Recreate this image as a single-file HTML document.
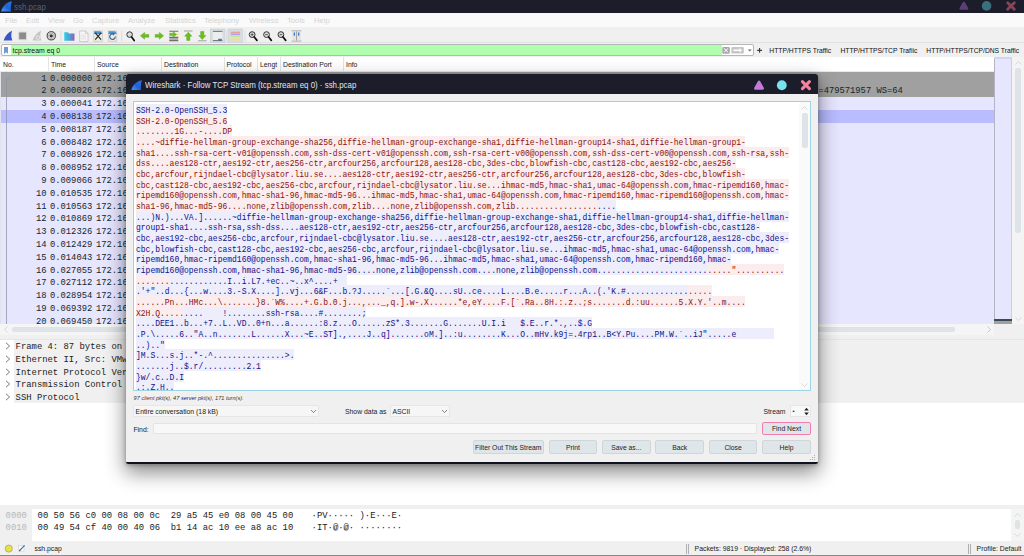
<!DOCTYPE html><html><head><meta charset="utf-8"><title>ssh.pcap</title><style>
#title .t,#menu span,#filter .txt,#hdr span,.row span,.drow span{margin-top:1.1px}

*{box-sizing:border-box;margin:0;padding:0}
html,body{width:1024px;height:556px;overflow:hidden;background:#fff}
body{position:relative;font-family:"Liberation Sans",sans-serif;font-size:8.5px;color:#222}
.abs{position:absolute}
.mono{font-family:"Liberation Mono",monospace}
#title{left:0;top:0;width:1024px;height:12.8px;background:#1b1d2b}
#title .t{left:14.4px;top:0;line-height:12.8px;font-size:8.8px;transform:scaleX(.905);transform-origin:0 0;white-space:nowrap;color:#5d606e}
#menu{left:0;top:12.8px;width:1024px;height:14.6px;background:#fafafa}
#menu span{position:absolute;top:0;line-height:14.6px;font-size:8.1px;transform:scaleX(.95);transform-origin:0 0;white-space:nowrap;color:#d4d4d4}
#tool{left:0;top:27.4px;width:1024px;height:15.4px;background:#f0f0f0;border-bottom:1px solid #e2e2e2}
#filter{left:0;top:42.8px;width:1024px;height:14.2px;background:#f0f0f0}
#fin{left:2px;top:1.5px;width:721px;height:11.4px;background:#afffaf;border:1px solid #b9c1b9;border-radius:1.5px}
#fbk{left:2px;top:1.5px;width:9px;height:11.4px;background:#fff;border:1px solid #b0b0b0;border-radius:1.5px}
#filter .txt{top:.4px;line-height:14px;font-size:6.9px;color:#111}
#hdr{left:0;top:57px;width:1024px;height:14.2px;background:#fff}
#hdr span{position:absolute;top:0;line-height:14.2px;font-size:6.85px;color:#222}
#hdr i{position:absolute;top:0;width:1px;height:14.2px;background:#e4e4e4}
.row{position:absolute;left:0;width:994.3px;height:12.8px;line-height:12.8px;font-size:8.81px;color:#12272e;white-space:pre}
.row span{position:absolute;top:0}
.drow{position:absolute;left:0;width:1024px;height:12.8px;line-height:12.8px;font-size:8.9px;color:#222;white-space:pre;background:linear-gradient(90deg,#fff 13.6px,#f0f0f0 13.6px)}
.stream{position:absolute;left:135.9px;top:104.1px;width:770px;font-size:9.2px;line-height:10.667px;white-space:pre;transform:scaleX(.8709);transform-origin:0 0}
.stream div{height:10.667px}
.stream span{display:inline-block;height:10.667px;line-height:14.4px;vertical-align:top}
.c{color:#8a1010;}
.s{color:#10108a;}
.btn{position:absolute;white-space:nowrap;height:11.2px;border:1px solid #cfd6da;background:#dfe6e9;border-radius:2px;font-size:6.8px;line-height:9.6px;text-align:center;color:#222}
</style></head><body>
<div id="title" class="abs">
<svg class="abs" style="left:1.2px;top:1px" width="11.4" height="10.8" viewBox="0 0 11.4 10.8"><defs><linearGradient id="fg0" x1="0" y1="1" x2="1" y2="0"><stop offset="0" stop-color="#4a9af5"/><stop offset=".5" stop-color="#1f62d8"/><stop offset="1" stop-color="#2a78e6"/></linearGradient></defs><path d="M0.2 10.5 C1.2 6 4.4 1.4 10.9 0.2 C9.8 3.4 9.5 7 10.1 10.5 Z" fill="url(#fg0)"/></svg>
<span class="abs t">ssh.pcap</span>
<svg class="abs" style="left:955px;top:0" width="66" height="13" viewBox="0 0 66 13"><path d="M5.6 8.5 L8.85 2.9 L12.1 8.5 Z" fill="#5d3f78" stroke="#5d3f78" stroke-width="2.4" stroke-linejoin="round"/><circle cx="31.6" cy="5.9" r="4.8" fill="#39707c"/><path d="M52.7 2.7 L59.3 9.3 M59.3 2.7 L52.7 9.3" stroke="#874359" stroke-width="2.9" stroke-linecap="round"/></svg>
</div>
<div id="menu" class="abs">
<span style="left:4.8px">File</span>
<span style="left:25.9px">Edit</span>
<span style="left:47.9px">View</span>
<span style="left:73.4px">Go</span>
<span style="left:92.1px">Capture</span>
<span style="left:128.2px">Analyze</span>
<span style="left:164.5px">Statistics</span>
<span style="left:204.2px">Telephony</span>
<span style="left:248.5px">Wireless</span>
<span style="left:287.1px">Tools</span>
<span style="left:313.8px">Help</span>
</div>
<div id="tool" class="abs">
<svg class="abs" style="left:0;top:.5px" width="320" height="15.4" viewBox="0 0 320 15.4">
<rect x="210.5" y="1" width="14.5" height="14" fill="#d5dde2" stroke="#c0c9ce" stroke-width=".5"/>
<rect x="228" y="1" width="14.5" height="14" fill="#d5dde2" stroke="#c0c9ce" stroke-width=".5"/>
<rect x="60.6" y="2.5" width=".6" height="11" fill="#d0d0d0"/>
<rect x="121.5" y="2.5" width=".6" height="11" fill="#d0d0d0"/>
<rect x="226.3" y="2.5" width=".6" height="11" fill="#d0d0d0"/>
<rect x="244.7" y="2.5" width=".6" height="11" fill="#d0d0d0"/>
<path d="M3.5 12.5 C5 8 8 4.5 12 2.8 C10.8 6 11 9.5 12.3 12.5 Z" fill="#3a55c8"/>
<rect x="18.6" y="4" width="7.8" height="7.8" fill="#8c8c8c" stroke="#dcdcdc" stroke-width="1"/>
<path d="M32.5 12.5 C34 8 37 4.5 41 2.8 C39.8 6 40 9.5 41.3 12.5 Z" fill="#c4c4c4"/><circle cx="37.8" cy="9.6" r="1.8" fill="none" stroke="#f4f4f4" stroke-width=".8"/>
<circle cx="51.2" cy="7.8" r="5.2" fill="#e2e2e2"/><circle cx="51.2" cy="7.8" r="4.1" fill="#ededed" stroke="#3a3a3a" stroke-width="1"/><circle cx="51.2" cy="7.8" r="2.7" fill="none" stroke="#8a8a8a" stroke-width=".7"/><circle cx="51.2" cy="7.8" r="1.6" fill="#333"/>
<defs><linearGradient id="gf" x1="0" x2="1"><stop offset="0" stop-color="#2fd0e6"/><stop offset=".55" stop-color="#4e9fd6"/><stop offset="1" stop-color="#9a55b8"/></linearGradient></defs>
<path d="M64.2 4.2 h3.6 l1 1.2 h5.6 v7.4 h-10.2 Z" fill="url(#gf)"/>
<path d="M79.6 3h6l2.4 2.4v8.2h-8.4z" fill="#f6f6f6" stroke="#bcbcbc" stroke-width=".7"/><path d="M85.6 3v2.4h2.4" fill="#dedede" stroke="#bcbcbc" stroke-width=".5"/><path d="M81.2 7h5.2M81.2 8.9h5.2M81.2 10.8h5.2" stroke="#c6c6c6" stroke-width=".6" stroke-dasharray="1.2 .5"/>
<rect x="93.8" y="3" width="8.6" height="10.2" fill="#efeede" stroke="#b8bcb8" stroke-width=".6"/><path d="M94.1 3.3h6.2l1.8 1.8v1h-8z" fill="#3f92dc"/><path d="M95.2 4.8 L101 11.6 M101 4.8 L95.2 11.6" stroke="#2a2a2a" stroke-width="1.2"/>
<rect x="108.2" y="3" width="8.6" height="10.2" fill="#efeede" stroke="#b8bcb8" stroke-width=".6"/><path d="M108.5 3.3h6.2l1.8 1.8v1h-8z" fill="#3f92dc"/><path d="M115.3 8.6 A2.8 2.8 0 1 1 113.6 6" fill="none" stroke="#4a6a9e" stroke-width="1.3"/><path d="M112.4 4.4 l2.8 1.4 l-2.2 1.9 z" fill="#4a6a9e"/>
<circle cx="129.6" cy="6.6" r="2.8" fill="#dcdcdc" stroke="#333" stroke-width="1"/><path d="M131.6 8.9 L134.2 12.6" stroke="#111" stroke-width="1.7" stroke-linecap="round"/>
<path d="M140.4 7.8 l4.2 -3.4 v2 h4.2 v2.8 h-4.2 v2 z" fill="#6cc01c" stroke="#4f9a10" stroke-width=".4"/>
<path d="M163.6 7.8 l-4.2 -3.4 v2 h-4.2 v2.8 h4.2 v2 z" fill="#6cc01c" stroke="#4f9a10" stroke-width=".4"/>
<path d="M169.3 3.2h9M169.3 9.4h9M169.3 11h9M169.3 12.6h9" stroke="#6e6e6e" stroke-width="1.1"/><rect x="175" y="5.6" width="3.6" height="1.4" fill="#ffe94a"/><path d="M176.6 6.4 l-3.4 -2.8 v1.6 h-3.6 v2.4 h3.6 v1.6 z" fill="#6cc01c" stroke="#4f9a10" stroke-width=".3"/>
<path d="M184 3h8.6" stroke="#9a9a9a" stroke-width=".9"/><path d="M188.3 4.2 l3.6 4 h-2 v4.2 h-3.2 v-4.2 h-2 z" fill="#6cc01c" stroke="#4f9a10" stroke-width=".4"/>
<path d="M198 12.8h8.6" stroke="#9a9a9a" stroke-width=".9"/><path d="M202.3 11.6 l3.6 -4 h-2 v-4.2 h-3.2 v4.2 h-2 z" fill="#6cc01c" stroke="#4f9a10" stroke-width=".4"/>
<rect x="213" y="3.2" width="9.4" height="9" fill="#ededed"/><path d="M213 3.4h9.4M213 12.6h9.4" stroke="#555" stroke-width=".8"/><path d="M218.2 11.2 h3.6 l-1.8 1.6 z" fill="#2b5fc2" stroke="#2b5fc2" stroke-width=".6"/>
<rect x="230.6" y="3" width="9.6" height="10" fill="#eee"/><path d="M230.6 4.3h9.6" stroke="#f29a9a" stroke-width="1.7"/><path d="M230.6 6.2h9.6" stroke="#a6a6ee" stroke-width="1.7"/><path d="M230.6 8.1h9.6" stroke="#b4e89a" stroke-width="1.7"/><path d="M230.6 10h9.6" stroke="#ecdc9a" stroke-width="1.7"/><path d="M230.6 11.9h9.6" stroke="#e8d8a8" stroke-width="1.7"/>
<circle cx="252.2" cy="6.6" r="2.9" fill="#d6d6d6" stroke="#333" stroke-width="1"/><path d="M254.29999999999998 8.9 L257.0 12.4" stroke="#111" stroke-width="1.7" stroke-linecap="round"/>
<path d="M250.89999999999998 6.6h2.6" stroke="#444" stroke-width=".8"/>
<path d="M252.2 5.3v2.6" stroke="#444" stroke-width=".8"/>
<circle cx="266.6" cy="6.6" r="2.9" fill="#d6d6d6" stroke="#333" stroke-width="1"/><path d="M268.70000000000005 8.9 L271.40000000000003 12.4" stroke="#111" stroke-width="1.7" stroke-linecap="round"/>
<path d="M265.3 6.6h2.6" stroke="#444" stroke-width=".8"/>
<circle cx="281" cy="6.6" r="2.9" fill="#d6d6d6" stroke="#333" stroke-width="1"/><path d="M283.1 8.9 L285.8 12.4" stroke="#111" stroke-width="1.7" stroke-linecap="round"/>
<path d="M279.7 6.6h2.6" stroke="#444" stroke-width=".8"/>
<path d="M291.8 3h9.6M291.8 13h9.6" stroke="#777" stroke-width=".7"/><rect x="292.4" y="3.4" width="8.4" height="9.2" fill="#e4e4e4"/><path d="M296.6 3.4v9.2" stroke="#888" stroke-width=".7"/><path d="M294.4 4.6v3.2M298.8 4.6v3.2" stroke="#2b6fd0" stroke-width="1.2"/>
</svg></div>
<div id="filter" class="abs">
<div class="abs" style="left:1.2px;top:1.5px;width:752.6px;height:11.5px;background:#fff;border:1px solid #b6b6b6;border-radius:2px;overflow:hidden"><div class="abs" style="left:8.8px;top:0;width:710.9px;height:10px;background:#afffaf"></div></div>
<svg class="abs" style="left:3.8px;top:4px" width="4.4" height="7" viewBox="0 0 4.4 7"><path d="M0 0h4.4v7l-2.2-1.7L0 7z" fill="#6e9bd6"/></svg>
<span class="abs txt" style="left:12.6px">tcp.stream eq 0</span>
<svg class="abs" style="left:720px;top:0" width="48" height="14.2" viewBox="0 0 48 14.2"><rect x="2.3" y="3.9" width="7.5" height="6.8" rx="1.2" fill="#a6a6a6"/><path d="M3.9 5.3l4.3 4M8.2 5.3l-4.3 4" stroke="#fff" stroke-width="1"/><rect x="11.3" y="4" width="12.5" height="6.6" rx="1.2" fill="#c6c6c6"/><path d="M13.4 7.3h6.8" stroke="#fff" stroke-width="1.5"/><path d="M19.4 5l2.6 2.3l-2.6 2.3z" fill="#fff"/><path d="M27.9 6.5h3.8l-1.9 2z" fill="#666"/><path d="M37.2 7.4h4.8M39.6 5v4.8" stroke="#3a3a3a" stroke-width="1.1"/></svg>
<span class="abs txt" style="left:769.3px;font-size:6.78px">HTTP/HTTPS Traffic</span>
<span class="abs txt" style="left:840.5px;font-size:6.75px">HTTP/HTTPS/TCP Trafiic</span>
<span class="abs txt" style="left:926.3px;font-size:6.72px">HTTP/HTTPS/TCP/DNS Traffic</span>
</div>
<div id="hdr" class="abs">
<span style="left:3px">No.</span>
<span style="left:51px">Time</span>
<span style="left:97px">Source</span>
<span style="left:164px">Destination</span>
<span style="left:226.5px">Protocol</span>
<span style="left:260px">Lengt</span>
<span style="left:283px">Destination Port</span>
<span style="left:346px">Info</span>
<i style="left:47.5px"></i>
<i style="left:94px"></i>
<i style="left:161px"></i>
<i style="left:223.5px"></i>
<i style="left:257px"></i>
<i style="left:280px"></i>
<i style="left:342.5px"></i>
</div>
<div class="abs" style="left:0;top:71.2px;width:1024px;height:255px;background:#e7e6ff"></div>
<div class="row mono" style="top:71.50px;background:#a0a0a0"><span style="left:0;width:46.5px;text-align:right">1</span><span style="left:50px">0.000000</span><span style="left:96px">172.16</span></div>
<div class="row mono" style="top:84.30px;background:#a0a0a0"><span style="left:0;width:46.5px;text-align:right">2</span><span style="left:50px">0.000026</span><span style="left:96px">172.16</span><span style="left:813.1px">r=479571957 WS=64</span></div>
<div class="row mono" style="top:97.10px;background:#e7e6ff"><span style="left:0;width:46.5px;text-align:right">3</span><span style="left:50px">0.000041</span><span style="left:96px">172.16</span></div>
<div class="row mono" style="top:109.90px;background:#b9bcff"><span style="left:0;width:46.5px;text-align:right">4</span><span style="left:50px">0.008138</span><span style="left:96px">172.16</span></div>
<div class="row mono" style="top:122.70px;background:#e7e6ff"><span style="left:0;width:46.5px;text-align:right">5</span><span style="left:50px">0.008187</span><span style="left:96px">172.16</span></div>
<div class="row mono" style="top:135.50px;background:#e7e6ff"><span style="left:0;width:46.5px;text-align:right">6</span><span style="left:50px">0.008482</span><span style="left:96px">172.16</span></div>
<div class="row mono" style="top:148.30px;background:#e7e6ff"><span style="left:0;width:46.5px;text-align:right">7</span><span style="left:50px">0.008926</span><span style="left:96px">172.16</span></div>
<div class="row mono" style="top:161.10px;background:#e7e6ff"><span style="left:0;width:46.5px;text-align:right">8</span><span style="left:50px">0.008952</span><span style="left:96px">172.16</span></div>
<div class="row mono" style="top:173.90px;background:#e7e6ff"><span style="left:0;width:46.5px;text-align:right">9</span><span style="left:50px">0.009066</span><span style="left:96px">172.16</span></div>
<div class="row mono" style="top:186.70px;background:#e7e6ff"><span style="left:0;width:46.5px;text-align:right">10</span><span style="left:50px">0.010535</span><span style="left:96px">172.16</span></div>
<div class="row mono" style="top:199.50px;background:#e7e6ff"><span style="left:0;width:46.5px;text-align:right">11</span><span style="left:50px">0.010563</span><span style="left:96px">172.16</span></div>
<div class="row mono" style="top:212.30px;background:#e7e6ff"><span style="left:0;width:46.5px;text-align:right">12</span><span style="left:50px">0.010869</span><span style="left:96px">172.16</span></div>
<div class="row mono" style="top:225.10px;background:#e7e6ff"><span style="left:0;width:46.5px;text-align:right">13</span><span style="left:50px">0.012326</span><span style="left:96px">172.16</span></div>
<div class="row mono" style="top:237.90px;background:#e7e6ff"><span style="left:0;width:46.5px;text-align:right">14</span><span style="left:50px">0.012429</span><span style="left:96px">172.16</span></div>
<div class="row mono" style="top:250.70px;background:#e7e6ff"><span style="left:0;width:46.5px;text-align:right">15</span><span style="left:50px">0.014043</span><span style="left:96px">172.16</span></div>
<div class="row mono" style="top:263.50px;background:#e7e6ff"><span style="left:0;width:46.5px;text-align:right">16</span><span style="left:50px">0.027055</span><span style="left:96px">172.16</span></div>
<div class="row mono" style="top:276.30px;background:#e7e6ff"><span style="left:0;width:46.5px;text-align:right">17</span><span style="left:50px">0.027112</span><span style="left:96px">172.16</span></div>
<div class="row mono" style="top:289.10px;background:#e7e6ff"><span style="left:0;width:46.5px;text-align:right">18</span><span style="left:50px">0.028954</span><span style="left:96px">172.16</span></div>
<div class="row mono" style="top:301.90px;background:#e7e6ff"><span style="left:0;width:46.5px;text-align:right">19</span><span style="left:50px">0.069392</span><span style="left:96px">172.16</span></div>
<div class="row mono" style="top:314.70px;background:#e7e6ff"><span style="left:0;width:46.5px;text-align:right">20</span><span style="left:50px">0.069450</span><span style="left:96px">172.16</span></div>
<div class="abs" style="left:0;top:71.5px;width:.9px;height:252.8px;background:#e2e2ea"></div>
<div class="abs" style="left:6px;top:78px;width:4px;height:248px;border-left:.9px solid #8c93a4;border-top:.9px solid #8c93a4;opacity:.75"></div>
<div class="abs" style="left:994.3px;top:57.4px;width:17.4px;height:266.4px;background:#e7e6ff;border-left:.8px solid #b4b4c4;border-right:.6px solid #d0d0dc"></div>
<div class="abs" style="left:994.3px;top:57.4px;width:17.4px;height:1.6px;background:#d4d3f2"></div>
<div class="abs" style="left:994.3px;top:318.6px;width:17.4px;height:2px;background:#3a4a55"></div>
<div class="abs" style="left:994.3px;top:321px;width:17.4px;height:2.6px;background:#a0a0a0"></div>
<div class="abs" style="left:1011.7px;top:57px;width:12.3px;height:269px;background:#f4f4f4"></div>
<div class="abs" style="left:1015.2px;top:68.4px;width:5.6px;height:164.8px;background:#dde3e6;border-radius:2px"></div>
<svg class="abs" style="left:1013.5px;top:60.4px" width="9" height="6" viewBox="0 0 9 6"><path d="M1.5 4.5L4.5 1.5L7.5 4.5" fill="none" stroke="#d6d6d6" stroke-width=".9"/></svg>
<svg class="abs" style="left:1013.5px;top:315.5px" width="9" height="6" viewBox="0 0 9 6"><path d="M1.5 1.5L4.5 4.5L7.5 1.5" fill="none" stroke="#d6d6d6" stroke-width=".9"/></svg>
<div class="abs" style="left:0;top:324.3px;width:994.3px;height:10.3px;background:#f5f5f5"></div>
<div class="abs" style="left:994.3px;top:324.3px;width:29.7px;height:10.3px;background:#f0f0f0"></div>
<div class="abs" style="left:11.8px;top:327.3px;width:943.1px;height:5.1px;background:#dde3e6;border-radius:2px"></div>
<svg class="abs" style="left:2.8px;top:325.3px" width="6" height="9" viewBox="0 0 6 9"><path d="M4.5 1.5L1.5 4.5L4.5 7.5" fill="none" stroke="#d4d4d4" stroke-width=".9"/></svg>
<svg class="abs" style="left:985.6px;top:325.3px" width="6" height="9" viewBox="0 0 6 9"><path d="M1.5 1.5L4.5 4.5L1.5 7.5" fill="none" stroke="#c4c4c4" stroke-width=".9"/></svg>
<div class="abs" style="left:0;top:334.6px;width:1024px;height:5.4px;background:#f0f0f0;border-bottom:.8px solid #e6e6e6"></div>
<div class="drow mono" style="top:340.00px"><svg class="abs" style="left:4.5px;top:2.1px" width="6" height="8" viewBox="0 0 6 8"><path d="M1 .8L4.6 4L1 7.2" fill="none" stroke="#555" stroke-width=".8"/></svg><span class="abs" style="left:15.6px;top:0">Frame 4: 87 bytes on</span></div>
<div class="drow mono" style="top:352.80px"><svg class="abs" style="left:4.5px;top:2.1px" width="6" height="8" viewBox="0 0 6 8"><path d="M1 .8L4.6 4L1 7.2" fill="none" stroke="#555" stroke-width=".8"/></svg><span class="abs" style="left:15.6px;top:0">Ethernet II, Src: VMw</span></div>
<div class="drow mono" style="top:365.60px"><svg class="abs" style="left:4.5px;top:2.1px" width="6" height="8" viewBox="0 0 6 8"><path d="M1 .8L4.6 4L1 7.2" fill="none" stroke="#555" stroke-width=".8"/></svg><span class="abs" style="left:15.6px;top:0">Internet Protocol Ver</span></div>
<div class="drow mono" style="top:378.40px"><svg class="abs" style="left:4.5px;top:2.1px" width="6" height="8" viewBox="0 0 6 8"><path d="M1 .8L4.6 4L1 7.2" fill="none" stroke="#555" stroke-width=".8"/></svg><span class="abs" style="left:15.6px;top:0">Transmission Control</span></div>
<div class="drow mono" style="top:391.20px"><svg class="abs" style="left:4.5px;top:2.1px" width="6" height="8" viewBox="0 0 6 8"><path d="M1 .8L4.6 4L1 7.2" fill="none" stroke="#555" stroke-width=".8"/></svg><span class="abs" style="left:15.6px;top:0">SSH Protocol</span></div>
<div class="abs" style="left:0;top:403.4px;width:1024px;height:101.6px;background:#fff"></div>
<div class="abs" style="left:0;top:505px;width:1024px;height:4px;background:#f0f0f0"></div>
<div class="abs" style="left:0;top:509px;width:1024px;height:32px;background:#fff"></div>
<div class="abs" style="left:0;top:509px;width:32.2px;height:32px;background:#f0f0f0"></div>
<div class="abs mono" style="left:0;top:511.10px;height:11.8px;line-height:11.8px;font-size:8.9px;white-space:pre;color:#222"><span class="abs" style="left:5.6px;color:#b8b8b8">0000</span><span class="abs" style="left:37.6px">00 50 56 c0 00 08 00 0c  29 a5 45 e0 08 00 45 00</span><span class="abs" style="left:311.6px">·PV····· )·E···E·</span></div>
<div class="abs mono" style="left:0;top:522.90px;height:11.8px;line-height:11.8px;font-size:8.9px;white-space:pre;color:#222"><span class="abs" style="left:5.6px;color:#b8b8b8">0010</span><span class="abs" style="left:37.6px">00 49 54 cf 40 00 40 06  b1 14 ac 10 ee a8 ac 10</span><span class="abs" style="left:311.6px">·IT·@·@· ········</span></div>
<div class="abs" style="left:1010.5px;top:509px;width:13.5px;height:32px;background:#f4f4f4"></div>
<div class="abs" style="left:1014.5px;top:520px;width:5.4px;height:9px;background:#dde3e6;border-radius:2px"></div>
<svg class="abs" style="left:1013px;top:511.5px" width="9" height="6" viewBox="0 0 9 6"><path d="M1.5 4.5L4.5 1.5L7.5 4.5" fill="none" stroke="#d6d6d6" stroke-width=".9"/></svg>
<svg class="abs" style="left:1013px;top:532px" width="9" height="6" viewBox="0 0 9 6"><path d="M1.5 1.5L4.5 4.5L7.5 1.5" fill="none" stroke="#d6d6d6" stroke-width=".9"/></svg>
<div class="abs" style="left:0;top:541px;width:1024px;height:15px;background:#f0f0f0;border-bottom:1.2px solid #8a8a8a"></div>
<svg class="abs" style="left:0;top:541px" width="40" height="14" viewBox="0 0 40 14"><circle cx="8.8" cy="7.6" r="3.6" fill="#e6e050" stroke="#9a963a" stroke-width=".6"/><rect x="18.6" y="4.6" width="5.4" height="6" fill="#fafafa" stroke="#c8c8c8" stroke-width=".5"/><path d="M19.6 9.6L24.6 4.4" stroke="#3a6fb8" stroke-width="1.2"/><path d="M19 10.2l1.6-.4l-1.2-1.2z" fill="#444"/></svg>
<span class="abs" style="left:34.5px;top:542.3px;line-height:14.6px;font-size:6.85px;color:#222">ssh.pcap</span>
<div class="abs" style="left:686px;top:543.6px;width:2.6px;height:10px;border-left:.8px solid #b0b0b0;border-right:.8px solid #b0b0b0"></div>
<div class="abs" style="left:968.4px;top:543.6px;width:2.6px;height:10px;border-left:.8px solid #b0b0b0;border-right:.8px solid #b0b0b0"></div>
<span class="abs" style="left:694.6px;top:542.3px;line-height:14.6px;font-size:6.85px;color:#222">Packets: 9819 · Displayed: 258 (2.6%)</span>
<span class="abs" style="left:976.6px;top:542.3px;line-height:14.6px;font-size:6.85px;color:#222">Profile: Default</span>
<div class="abs" style="left:126.3px;top:74.1px;width:691.8px;height:390.1px;background:#f0f0f0;border-radius:2.5px;box-shadow:0 8px 20px 1px rgba(0,0,0,.45),0 1px 4px rgba(0,0,0,.3);border-bottom:2.6px solid #10121f"></div>
<div class="abs" style="left:126.3px;top:74.1px;width:691.8px;height:19.5px;background:#1b1d2b;border-radius:2.5px 2.5px 0 0"></div>
<svg class="abs" style="left:131px;top:79.7px" width="11.4" height="10.8" viewBox="0 0 11.4 10.8"><defs><linearGradient id="fg1" x1="0" y1="1" x2="1" y2="0"><stop offset="0" stop-color="#4a9af5"/><stop offset=".5" stop-color="#1f62d8"/><stop offset="1" stop-color="#2a78e6"/></linearGradient></defs><path d="M0.2 10.5 C1.2 6 4.4 1.4 10.9 0.2 C9.8 3.4 9.5 7 10.1 10.5 Z" fill="url(#fg1)"/></svg>
<span class="abs" style="left:144.5px;top:76.4px;line-height:18px;font-size:8.8px;color:#e4e6ee;white-space:nowrap;transform:scaleX(.898);transform-origin:0 0">Wireshark · Follow TCP Stream (tcp.stream eq 0) · ssh.pcap</span>
<svg class="abs" style="left:748px;top:78px" width="68" height="15" viewBox="0 0 68 15"><path d="M7.4 10.4 L11.05 3.8 L14.7 10.4 Z" fill="#c678dd" stroke="#c678dd" stroke-width="2.6" stroke-linejoin="round"/><circle cx="33.8" cy="7.26" r="4.9" fill="#76e3ef"/><path d="M54.4 3.7 L61.4 10.7 M61.4 3.7 L54.4 10.7" stroke="#f5849b" stroke-width="3.1" stroke-linecap="round"/></svg>
<div class="abs" style="left:133px;top:101.4px;width:678.4px;height:289.4px;background:#fff;border:1px solid #9ed3e6"></div>
<div class="abs" style="left:135.9px;top:104.1px;width:664px;height:285.6px;overflow:hidden">
<i class="abs" style="left:0.0px;top:0.00px;width:91.2px;height:10.8px;background:#ededfb"></i>
<i class="abs" style="left:0.0px;top:10.67px;width:91.2px;height:10.8px;background:#fbeded"></i>
<i class="abs" style="left:0.0px;top:21.33px;width:96.0px;height:10.8px;background:#fbeded"></i>
<i class="abs" style="left:0.0px;top:32.00px;width:609.6px;height:10.8px;background:#fbeded"></i>
<i class="abs" style="left:0.0px;top:42.67px;width:652.8px;height:10.8px;background:#fbeded"></i>
<i class="abs" style="left:0.0px;top:53.34px;width:600.0px;height:10.8px;background:#fbeded"></i>
<i class="abs" style="left:0.0px;top:64.00px;width:609.6px;height:10.8px;background:#fbeded"></i>
<i class="abs" style="left:0.0px;top:74.67px;width:652.8px;height:10.8px;background:#fbeded"></i>
<i class="abs" style="left:0.0px;top:85.34px;width:652.8px;height:10.8px;background:#fbeded"></i>
<i class="abs" style="left:0.0px;top:96.00px;width:460.8px;height:10.8px;background:#fbeded"></i>
<i class="abs" style="left:460.8px;top:96.00px;width:19.2px;height:10.8px;background:#ededfb"></i>
<i class="abs" style="left:0.0px;top:106.67px;width:652.8px;height:10.8px;background:#ededfb"></i>
<i class="abs" style="left:0.0px;top:117.34px;width:624.0px;height:10.8px;background:#ededfb"></i>
<i class="abs" style="left:0.0px;top:128.00px;width:652.8px;height:10.8px;background:#ededfb"></i>
<i class="abs" style="left:0.0px;top:138.67px;width:643.2px;height:10.8px;background:#ededfb"></i>
<i class="abs" style="left:0.0px;top:149.34px;width:595.2px;height:10.8px;background:#ededfb"></i>
<i class="abs" style="left:0.0px;top:160.00px;width:571.2px;height:10.8px;background:#ededfb"></i>
<i class="abs" style="left:571.2px;top:160.00px;width:76.8px;height:10.8px;background:#fbeded"></i>
<i class="abs" style="left:0.0px;top:170.67px;width:33.6px;height:10.8px;background:#fbeded"></i>
<i class="abs" style="left:33.6px;top:170.67px;width:177.6px;height:10.8px;background:#ededfb"></i>
<i class="abs" style="left:0.0px;top:181.34px;width:552.0px;height:10.8px;background:#ededfb"></i>
<i class="abs" style="left:552.0px;top:181.34px;width:24.0px;height:10.8px;background:#fbeded"></i>
<i class="abs" style="left:0.0px;top:192.01px;width:609.6px;height:10.8px;background:#fbeded"></i>
<i class="abs" style="left:0.0px;top:202.67px;width:48.0px;height:10.8px;background:#fbeded"></i>
<i class="abs" style="left:48.0px;top:202.67px;width:182.4px;height:10.8px;background:#ededfb"></i>
<i class="abs" style="left:0.0px;top:213.34px;width:456.0px;height:10.8px;background:#ededfb"></i>
<i class="abs" style="left:0.0px;top:224.01px;width:638.4px;height:10.8px;background:#ededfb"></i>
<i class="abs" style="left:0.0px;top:234.67px;width:28.8px;height:10.8px;background:#ededfb"></i>
<i class="abs" style="left:0.0px;top:245.34px;width:158.4px;height:10.8px;background:#ededfb"></i>
<i class="abs" style="left:0.0px;top:256.01px;width:124.8px;height:10.8px;background:#ededfb"></i>
<i class="abs" style="left:0.0px;top:266.68px;width:48.0px;height:10.8px;background:#ededfb"></i>
<i class="abs" style="left:0.0px;top:277.34px;width:38.4px;height:10.8px;background:#ededfb"></i>
</div>
<div class="stream mono" style="height:285.6px;overflow:hidden"><div><span class="s">SSH-2.0-OpenSSH_5.3</span></div><div><span class="c">SSH-2.0-OpenSSH_5.6</span></div><div><span class="c">........1G...-....DP</span></div><div><span class="c">....~diffie-hellman-group-exchange-sha256,diffie-hellman-group-exchange-sha1,diffie-hellman-group14-sha1,diffie-hellman-group1-</span></div><div><span class="c">sha1....ssh-rsa-cert-v01@openssh.com,ssh-dss-cert-v01@openssh.com,ssh-rsa-cert-v00@openssh.com,ssh-dss-cert-v00@openssh.com,ssh-rsa,ssh-</span></div><div><span class="c">dss....aes128-ctr,aes192-ctr,aes256-ctr,arcfour256,arcfour128,aes128-cbc,3des-cbc,blowfish-cbc,cast128-cbc,aes192-cbc,aes256-</span></div><div><span class="c">cbc,arcfour,rijndael-cbc@lysator.liu.se....aes128-ctr,aes192-ctr,aes256-ctr,arcfour256,arcfour128,aes128-cbc,3des-cbc,blowfish-</span></div><div><span class="c">cbc,cast128-cbc,aes192-cbc,aes256-cbc,arcfour,rijndael-cbc@lysator.liu.se...ihmac-md5,hmac-sha1,umac-64@openssh.com,hmac-ripemd160,hmac-</span></div><div><span class="c">ripemd160@openssh.com,hmac-sha1-96,hmac-md5-96...ihmac-md5,hmac-sha1,umac-64@openssh.com,hmac-ripemd160,hmac-ripemd160@openssh.com,hmac-</span></div><div><span class="c">sha1-96,hmac-md5-96....none,zlib@openssh.com,zlib....none,zlib@openssh.com,zlib.................</span><span class="s">....</span></div><div><span class="s">...)N.)...VA.]......~diffie-hellman-group-exchange-sha256,diffie-hellman-group-exchange-sha1,diffie-hellman-group14-sha1,diffie-hellman-</span></div><div><span class="s">group1-sha1....ssh-rsa,ssh-dss....aes128-ctr,aes192-ctr,aes256-ctr,arcfour256,arcfour128,aes128-cbc,3des-cbc,blowfish-cbc,cast128-</span></div><div><span class="s">cbc,aes192-cbc,aes256-cbc,arcfour,rijndael-cbc@lysator.liu.se....aes128-ctr,aes192-ctr,aes256-ctr,arcfour256,arcfour128,aes128-cbc,3des-</span></div><div><span class="s">cbc,blowfish-cbc,cast128-cbc,aes192-cbc,aes256-cbc,arcfour,rijndael-cbc@lysator.liu.se...ihmac-md5,hmac-sha1,umac-64@openssh.com,hmac-</span></div><div><span class="s">ripemd160,hmac-ripemd160@openssh.com,hmac-sha1-96,hmac-md5-96...ihmac-md5,hmac-sha1,umac-64@openssh.com,hmac-ripemd160,hmac-</span></div><div><span class="s">ripemd160@openssh.com,hmac-sha1-96,hmac-md5-96....none,zlib@openssh.com....none,zlib@openssh.com.......................</span><span class="c">.....&quot;..........</span></div><div><span class="c">.......</span><span class="s">............I..i.L7.+ec..~..x^....+  </span></div><div><span class="s">.&#x27;+&quot;..d...{...w....3.-S.X....]..vj...6&amp;F...b.?J.....`...[.G.&amp;Q....sU..ce....L....B.e.....r...A..(.&#x27;K.#.............</span><span class="c">.....</span></div><div><span class="c">......Pn...HMc...\.......}8.`W%....+.G.b.0.j...,..._,q.].w-.X......*e,eY....F.[`.Ra..8H.:.z..;s.......d.:uu......5.X.Y.&#x27;..m....</span></div><div><span class="c">X2H.Q.....</span><span class="s">....    !........ssh-rsa....#........;</span></div><div><span class="s">....DEE1..b...+7..L..VD..0+n...a......:8.z...O......zS*.3.......G.......U.I.i   $.E..r.*.,..$.G</span></div><div><span class="s">.P.\.....6..&quot;A..n.......L......X...~E..ST].,....J..q].......oM.]..:u........K...O..mHv.k9j=.4rp1..B&lt;Y.Pu....PM.W.`..iJ&quot;.....e        </span></div><div><span class="s">..)..&quot;</span></div><div><span class="s">]M.S...s.j..*-.^...............&gt;.</span></div><div><span class="s">.......j..$.r/.........2.1</span></div><div><span class="s">}w/.c..D.I</span></div><div><span class="s">.:.Z.H..</span></div></div>
<div class="abs" style="left:798.6px;top:102.4px;width:11.8px;height:287.4px;background:#fafafa"></div>
<div class="abs" style="left:802px;top:113px;width:5.8px;height:34.5px;background:#dde3e6;border-radius:2px"></div>
<svg class="abs" style="left:800.4px;top:104.6px" width="9" height="6" viewBox="0 0 9 6"><path d="M1.5 4.5L4.5 1.5L7.5 4.5" fill="none" stroke="#d6d6d6" stroke-width=".9"/></svg>
<svg class="abs" style="left:800.4px;top:381.5px" width="9" height="6" viewBox="0 0 9 6"><path d="M1.5 1.5L4.5 4.5L7.5 1.5" fill="none" stroke="#d6d6d6" stroke-width=".9"/></svg>
<div class="abs" style="left:133.6px;top:393.6px;font-size:5.6px;line-height:8px;font-style:italic;color:#333;white-space:pre">97 <span style="color:#8a1a1a">client</span> pkt(s), 47 <span style="color:#1a1a8a">server</span> pkt(s), 171 turn(s).</div>
<div class="abs" style="left:133px;top:405px;width:185.6px;height:11.6px;background:#f6f6f6;border:1px solid #e6e6e6;border-radius:1px"></div>
<span class="abs" style="left:135.6px;top:406px;line-height:11.6px;font-size:6.85px;color:#222">Entire conversation (18 kB)</span>
<svg class="abs" style="left:310px;top:408.6px" width="7" height="5" viewBox="0 0 7 5"><path d="M1 1L3.5 3.6L6 1" fill="none" stroke="#555" stroke-width=".7"/></svg>
<span class="abs" style="left:345px;top:406px;line-height:11.6px;font-size:6.85px;color:#222">Show data as</span>
<div class="abs" style="left:390px;top:405px;width:60px;height:11.6px;background:#f6f6f6;border:1px solid #e6e6e6;border-radius:1px"></div>
<span class="abs" style="left:392.4px;top:406px;line-height:11.6px;font-size:6.85px;color:#222">ASCII</span>
<svg class="abs" style="left:441.4px;top:408.6px" width="7" height="5" viewBox="0 0 7 5"><path d="M1 1L3.5 3.6L6 1" fill="none" stroke="#555" stroke-width=".7"/></svg>
<span class="abs" style="left:763.4px;top:406px;line-height:11.6px;font-size:6.85px;color:#222">Stream</span>
<div class="abs" style="left:790.3px;top:404.5px;width:20.7px;height:12.7px;background:#f8f8f8;border:1px solid #e6e6e6"></div>
<span class="abs" style="left:792.6px;top:406px;line-height:11.6px;font-size:6px;color:#222">•</span>
<svg class="abs" style="left:802.6px;top:405.6px" width="7" height="11" viewBox="0 0 7 11"><path d="M1.2 4.4L3.5 1.8L5.8 4.4Z M1.2 6.6L3.5 9.2L5.8 6.6Z" fill="#222"/></svg>
<span class="abs" style="left:133.4px;top:423.6px;line-height:12px;font-size:6.85px;color:#222">Find:</span>
<div class="abs" style="left:152.6px;top:422.6px;width:604.8px;height:11.8px;background:#f8f8f8;border:1px solid #e4e4e4;border-radius:1px"></div>
<div class="btn" style="left:762.2px;top:421.7px;width:48.6px;height:13.8px;line-height:12.4px;border:1.3px solid #f47db0;background:#dfe6e9;border-radius:2px">Find Next</div>
<div class="btn" style="left:472.8px;top:440.1px;width:71px;height:13.8px;line-height:13.2px">Filter Out This Stream</div>
<div class="btn" style="left:548.6px;top:440.1px;width:48.6px;height:13.8px;line-height:13.2px">Print</div>
<div class="btn" style="left:602px;top:440.1px;width:48.6px;height:13.8px;line-height:13.2px">Save as...</div>
<div class="btn" style="left:655.4px;top:440.1px;width:48.6px;height:13.8px;line-height:13.2px">Back</div>
<div class="btn" style="left:708.8px;top:440.1px;width:48.6px;height:13.8px;line-height:13.2px">Close</div>
<div class="btn" style="left:762.2px;top:440.1px;width:48.6px;height:13.8px;line-height:13.2px">Help</div>
<svg class="abs" style="left:809px;top:454px" width="7" height="7" viewBox="0 0 7 7"><path d="M5.5 1.5v0M5.5 3.5v0M3.5 3.5v0M5.5 5.5v0M3.5 5.5v0M1.5 5.5v0" stroke="#b0b0b0" stroke-width="1" stroke-linecap="square"/></svg>
</body></html>
